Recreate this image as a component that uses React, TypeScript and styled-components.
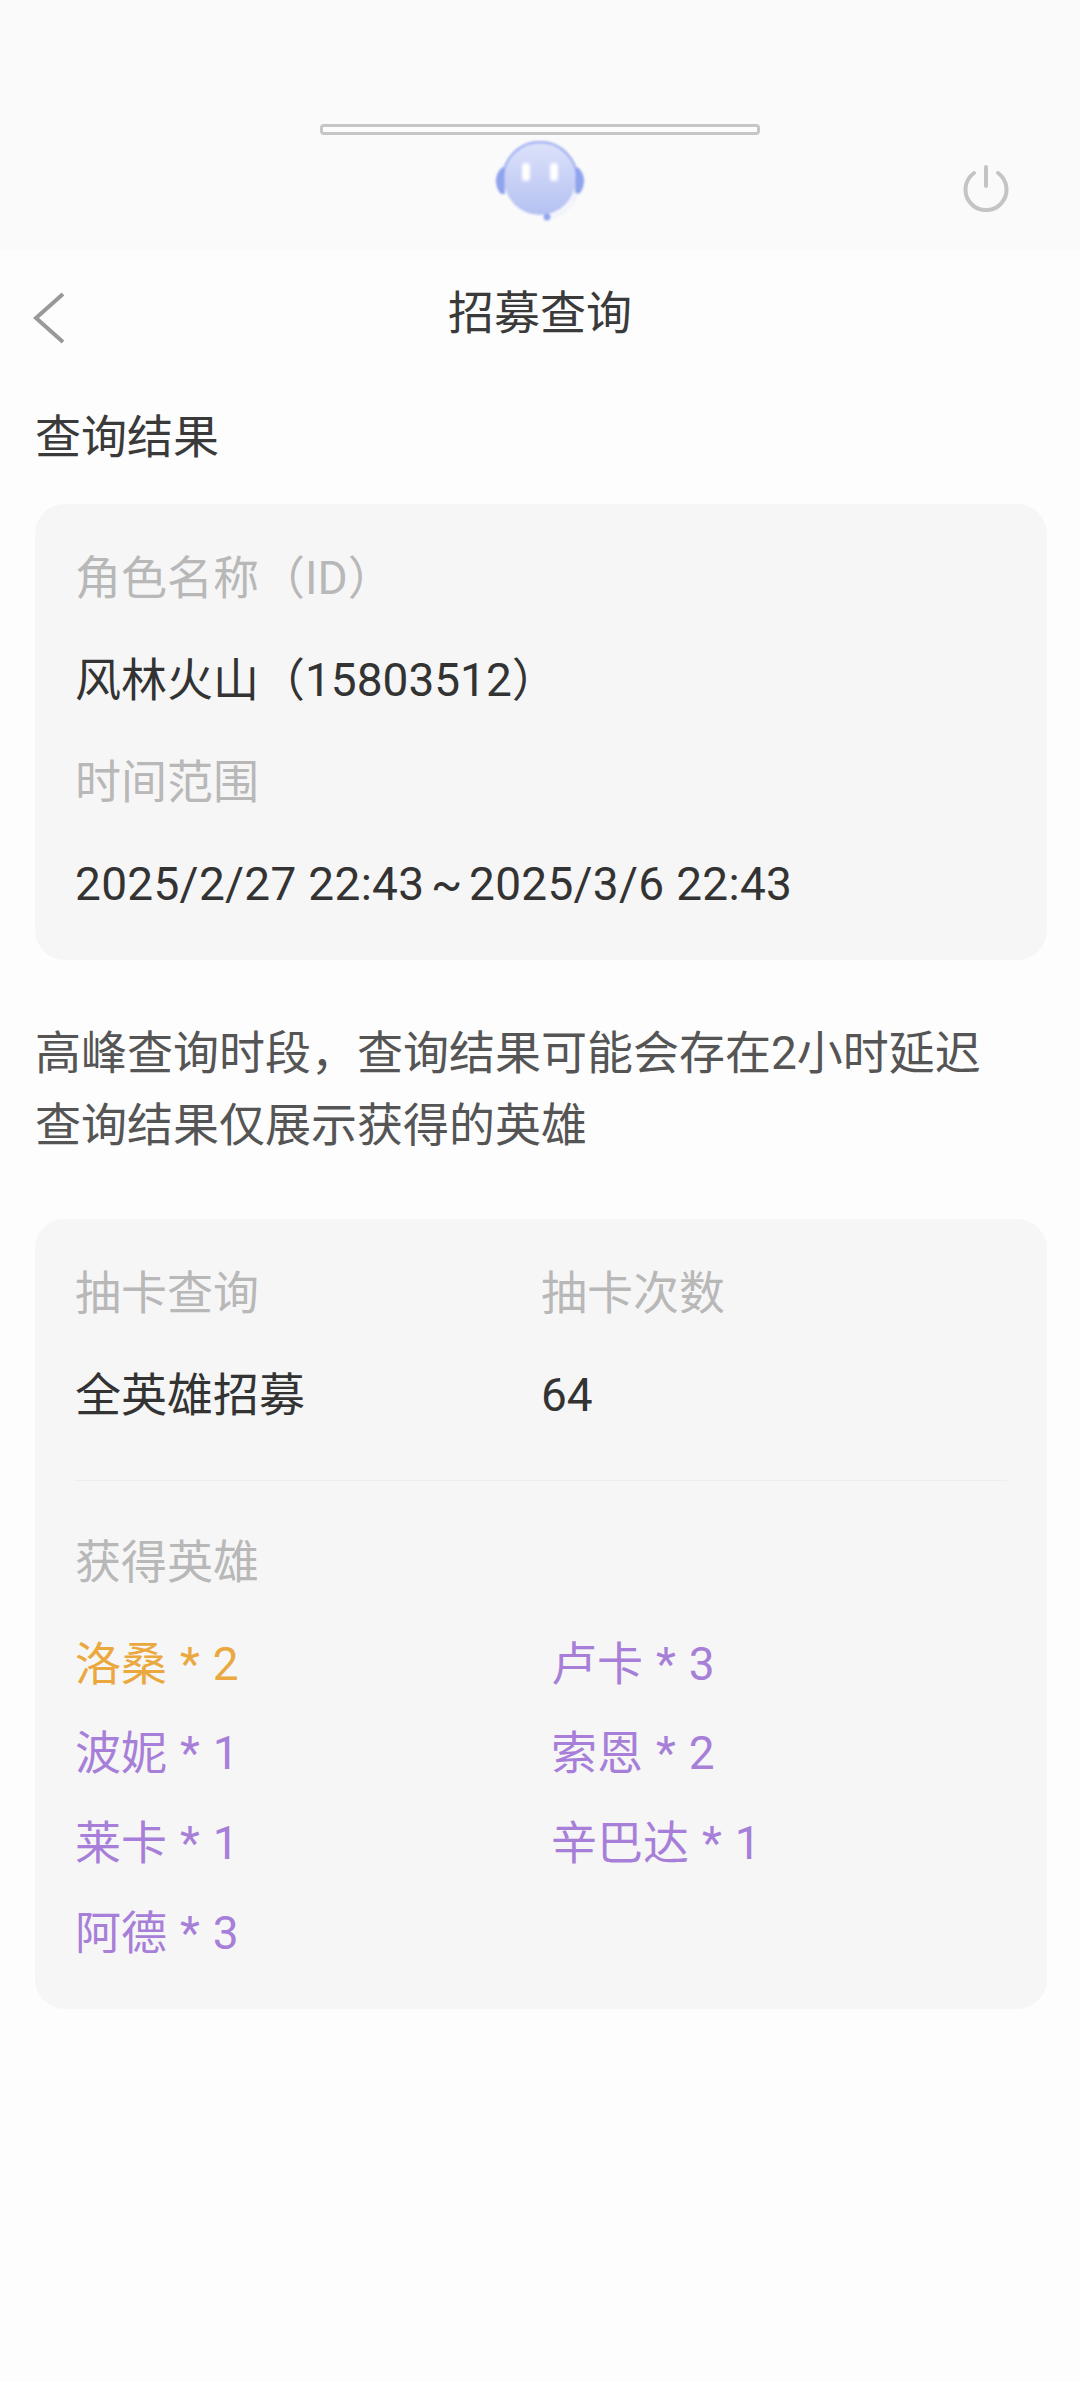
import styled, { createGlobalStyle } from 'styled-components';

const GlobalStyle = createGlobalStyle`
    html, body {
        margin: 0;
        padding: 0;
        background: #fdfdfd;
    }
    body {
        font-family: Roboto, "Noto Sans CJK SC", sans-serif;
    }
`;

const Page = styled.div`
    width: 1080px;
    height: 2382px;
    overflow: hidden;
    background: #fdfdfd;
`;

const TopStrip = styled.div`
    height: 250px;
    background: #fafafa;
    display: flex;
    flex-direction: column;
    align-items: center;
    padding-top: 124px;
    box-sizing: border-box;
    position: relative;
`;

const Handle = styled.div`
    width: 440px;
    height: 11px;
    box-sizing: border-box;
    border: 3px solid #c6c6c6;
    border-radius: 4px;
    background: #fdfdfd;
`;

const Avatar = styled.svg`
    width: 90px;
    height: 80px;
    margin-top: 6px;
    filter: blur(0.8px);
`;

const PowerButton = styled.svg`
    position: absolute;
    left: 962px;
    top: 164px;
    width: 48px;
    height: 48px;
    filter: blur(0.7px);
`;

const NavBar = styled.header`
    height: 124px;
    display: flex;
    align-items: center;
    justify-content: center;
    position: relative;
`;

const BackIcon = styled.svg`
    position: absolute;
    left: 32px;
    top: 41px;
    width: 36px;
    height: 54px;
`;

const Title = styled.h1`
    margin: 2px 0 0;
    font-size: 46px;
    line-height: 60px;
    font-weight: 400;
    color: #3a3a3a;
`;

const Content = styled.main`
    padding: 0 33px 0 35px;
    display: flex;
    flex-direction: column;
`;

const SectionTitle = styled.h2`
    margin: 33px 0 0;
    font-size: 46px;
    line-height: 60px;
    font-weight: 400;
    color: #3a3a3a;
`;

const Card = styled.section`
    background: #f6f6f6;
    border-radius: 30px;
    padding: 44px 40px 0;
    box-sizing: border-box;
`;

const InfoCard = styled(Card)`
    margin-top: 37px;
    height: 456px;
`;

const ResultCard = styled(Card)`
    margin-top: 58px;
    height: 790px;
`;

const Label = styled.div`
    font-size: 46px;
    line-height: 60px;
    color: #b8b8b8;
    margin-bottom: 42px;
`;

const Value = styled.div`
    font-size: 46px;
    line-height: 60px;
    color: #333;
    margin-bottom: 42px;
`;

const DateText = styled.span`
    letter-spacing: 0.3px;
`;

const Tilde = styled.span`
    padding: 0 6.5px;
`;

const Notes = styled.p`
    margin: 57px 0 0;
    font-size: 46px;
    line-height: 72px;
    color: #555;
`;

const TwoCols = styled.div`
    display: grid;
    grid-template-columns: 466px 1fr;
`;

const Divider = styled.hr`
    margin: 13px 0 0;
    border: 0;
    border-top: 1px solid #eeeeee;
`;

const HeroHeading = styled(Label)`
    margin: 51px 0 27px;
`;

const HeroGrid = styled.div`
    display: grid;
    grid-template-columns: 476px 1fr;
    grid-auto-rows: 89.6px;
    align-items: center;
`;

const Hero = styled.div<{ $gold?: boolean }>`
    font-size: 46px;
    line-height: 60px;
    word-spacing: 1.5px;
    color: ${(p) => (p.$gold ? '#eba83f' : '#a77fd8')};
`;

const heroes = [
    { name: '洛桑 * 2', gold: true },
    { name: '卢卡 * 3' },
    { name: '波妮 * 1' },
    { name: '索恩 * 2' },
    { name: '莱卡 * 1' },
    { name: '辛巴达 * 1' },
    { name: '阿德 * 3' },
];

function App() {
    return (
        <Page>
            <GlobalStyle />
            <TopStrip>
                <Handle />
                <Avatar viewBox="0 0 90 80">
                    <defs>
                        <linearGradient id="face" x1="0" y1="0" x2="0" y2="1">
                            <stop offset="0" stopColor="#dde2fa" />
                            <stop offset="1" stopColor="#b4c1f2" />
                        </linearGradient>
                        <filter id="soft">
                            <feGaussianBlur stdDeviation="1.1" />
                        </filter>
                    </defs>
                    <circle cx="45" cy="38" r="36" fill="url(#face)" />
                    <path d="M8 38 A37 37 0 0 1 82 38" fill="none" stroke="#a3b3f2" strokeWidth="2.5" />
                    <path d="M8 26 C-1 32 -1 46 6 53 L10 53 L9 26 Z" fill="#8fa3ee" />
                    <path d="M82 26 C91 32 91 46 84 53 L80 53 L81 26 Z" fill="#8fa3ee" />
                    <path d="M82 52 C77 66 67 74 54 76" fill="none" stroke="#eef1fd" strokeWidth="2.5" />
                    <circle cx="52" cy="76" r="3.5" fill="#93a6ee" />
                    <rect x="27" y="22" width="8" height="18" rx="3" fill="#ffffff" filter="url(#soft)" />
                    <rect x="55" y="22" width="8" height="18" rx="3" fill="#ffffff" filter="url(#soft)" />
                </Avatar>
                <PowerButton viewBox="0 0 48 48" fill="none" stroke="#c4c4c4" strokeWidth="4" strokeLinecap="round">
                    <path d="M24 3 V22" />
                    <path d="M12 9 A20.5 20.5 0 1 0 36 9" />
                </PowerButton>
            </TopStrip>
            <NavBar>
                <BackIcon viewBox="0 0 36 54" fill="none" stroke="#999" strokeWidth="4">
                    <path d="M31 3 L4 27 L31 51" />
                </BackIcon>
                <Title>招募查询</Title>
            </NavBar>
            <Content>
                <SectionTitle>查询结果</SectionTitle>
                <InfoCard>
                    <Label>角色名称（ID）</Label>
                    <Value>风林火山（15803512）</Value>
                    <Label>时间范围</Label>
                    <Value>
                        <DateText>
                            2025/2/27 22:43<Tilde>~</Tilde>2025/3/6 22:43
                        </DateText>
                    </Value>
                </InfoCard>
                <Notes>
                    高峰查询时段，查询结果可能会存在2小时延迟
                    <br />
                    查询结果仅展示获得的英雄
                </Notes>
                <ResultCard>
                    <TwoCols>
                        <Label>抽卡查询</Label>
                        <Label>抽卡次数</Label>
                        <Value>全英雄招募</Value>
                        <Value>64</Value>
                    </TwoCols>
                    <Divider />
                    <HeroHeading>获得英雄</HeroHeading>
                    <HeroGrid>
                        {heroes.map((hero) => (
                            <Hero key={hero.name} $gold={hero.gold}>
                                {hero.name}
                            </Hero>
                        ))}
                    </HeroGrid>
                </ResultCard>
            </Content>
        </Page>
    );
}

export default App;
